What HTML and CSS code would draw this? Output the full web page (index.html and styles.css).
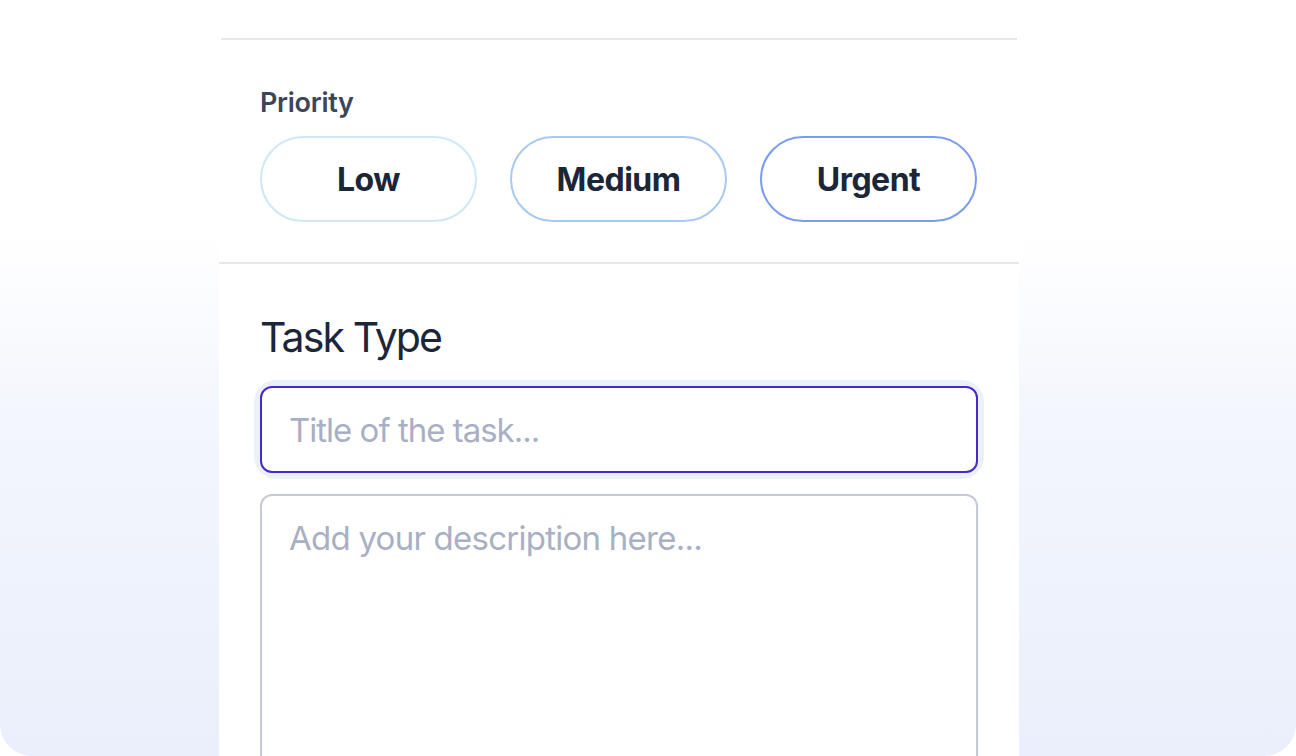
FILE: index.html
```html
<!DOCTYPE html>
<html lang="en">
<head>
<meta charset="utf-8">
<title>Task form</title>
<link rel="stylesheet" href="styles.css">
</head>
<body>
<div class="stage">
  <div class="card">
    <div class="top-rule"></div>
    <section class="priority">
      <h3 class="priority-label">Priority</h3>
      <div class="pills">
        <button class="pill pill-low">Low</button>
        <button class="pill pill-medium">Medium</button>
        <button class="pill pill-urgent">Urgent</button>
      </div>
    </section>
    <section class="task">
      <h2 class="task-label">Task Type</h2>
      <div class="ring">
        <input class="title-input" type="text" placeholder="Title of the task...">
      </div>
      <textarea class="desc" placeholder="Add your description here..."></textarea>
    </section>
  </div>
</div>
</body>
</html>
```
FILE: styles.css
```css
html, body {
  margin: 0;
  padding: 0;
  background: #ffffff;
}
body {
  font-family: "Inter", "Lato", sans-serif;
  width: 1296px;
  height: 756px;
  overflow: hidden;
}
.stage {
  width: 1296px;
  height: 756px;
  border-radius: 0 0 32px 32px;
  background: linear-gradient(to bottom, #ffffff 0%, #ffffff 31%, #f3f6fd 55%, #eaeffb 100%);
  overflow: hidden;
}
.card {
  margin-left: 219px;
  width: 800px;
  height: 756px;
  background: #ffffff;
  box-sizing: border-box;
  padding-top: 38px;
}
.top-rule {
  height: 2px;
  margin: 0 2px;
  background: #e6e7ee;
}
.priority {
  padding: 47px 41px 40px 41px;
  border-bottom: 2px solid #e6e7ee;
}
.priority-label {
  margin: 0 0 17px 0;
  font-size: 27px;
  line-height: 32px;
  font-weight: 600;
  color: #3a4659;
  letter-spacing: -0.3px;
}
.pills {
  display: flex;
  gap: 33px;
}
.pill {
  width: 217px;
  height: 86px;
  border-radius: 43px;
  background: #ffffff;
  font-family: inherit;
  font-size: 32px;
  font-weight: 700;
  color: #1b2638;
  letter-spacing: -0.5px;
  border: 2.5px solid;
  padding: 0;
}
.pill-low { border-color: #cde8f6; }
.pill-medium { border-color: #a9c8f3; }
.pill-urgent { border-color: #7b9cf1; }
.task {
  padding: 48px 41px 0 41px;
}
.task-label {
  margin: 0 0 24px 0;
  font-size: 41px;
  line-height: 50px;
  font-weight: 400;
  color: #1b2638;
  letter-spacing: -1.9px;
}
.ring {
  border-radius: 16px;
  box-shadow: 0 0 0 6px #ebf1fb;
  margin-bottom: 21px;
}
.title-input {
  display: block;
  width: 100%;
  height: 87px;
  box-sizing: border-box;
  border: 2px solid #4a27cc;
  border-radius: 12px;
  padding: 0 27px;
  font-family: inherit;
  font-size: 33px;
  letter-spacing: -1px;
  color: #1b2638;
  outline: none;
  background: #ffffff;
}
.title-input::placeholder,
.desc::placeholder {
  color: #a9afc4;
}
.desc {
  display: block;
  width: 100%;
  height: 320px;
  box-sizing: border-box;
  border: 2px solid #c6c9d6;
  border-radius: 12px;
  padding: 22px 27px;
  font-family: inherit;
  font-size: 33px;
  line-height: 40px;
  letter-spacing: -0.75px;
  color: #1b2638;
  resize: none;
  outline: none;
  background: #ffffff;
}
```
